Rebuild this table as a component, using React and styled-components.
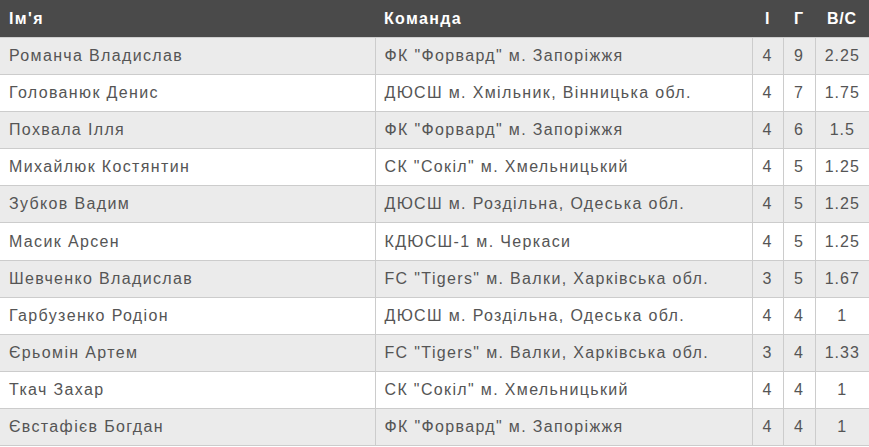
import React from "react";
import styled, { createGlobalStyle } from "styled-components";

const Global = createGlobalStyle`
  html, body { margin: 0; padding: 0; background: #fff; }
  body { font-family: "Liberation Sans", Arial, sans-serif; }
`;

const Table = styled.table`
  width: 869px;
  border-collapse: collapse;
  table-layout: fixed;
  font-family: "Liberation Sans", Arial, sans-serif;
  font-size: 16px;
  letter-spacing: 1.35px;
`;

const HeadRow = styled.tr`
  background: #4a4a4a;
`;

const Th = styled.th`
  color: #fff;
  font-weight: bold;
  text-align: ${(p) => (p.$center ? "center" : "left")};
  padding: 0 ${(p) => (p.$center ? "0" : "9px")};
  height: 37px;
  line-height: 18px;
  border-bottom: 1px solid #cfcfcf;
  letter-spacing: ${(p) => (p.$center ? "0.8px" : "1.35px")};
`;

const Row = styled.tr`
  background: ${(p) => (p.$odd ? "#ebebeb" : "#ffffff")};
`;

const Td = styled.td`
  color: #555;
  text-align: ${(p) => (p.$center ? "center" : "left")};
  padding: 0 ${(p) => (p.$center ? "0" : "9px")};
  height: 36.1px;
  line-height: 18px;
  border-bottom: 1px solid #cccccc;
  border-left: ${(p) => (p.$line ? "1px solid #cccccc" : "none")};
  white-space: nowrap;
  letter-spacing: ${(p) => (p.$center ? "1px" : "1.35px")};
`;

const rows = [
  ["Романча Владислав", 'ФК "Форвард" м. Запоріжжя', 4, 9, "2.25"],
  ["Голованюк Денис", "ДЮСШ м. Хмільник, Вінницька обл.", 4, 7, "1.75"],
  ["Похвала Ілля", 'ФК "Форвард" м. Запоріжжя', 4, 6, "1.5"],
  ["Михайлюк Костянтин", 'СК "Сокіл" м. Хмельницький', 4, 5, "1.25"],
  ["Зубков Вадим", "ДЮСШ м. Роздільна, Одеська обл.", 4, 5, "1.25"],
  ["Масик Арсен", "КДЮСШ-1 м. Черкаси", 4, 5, "1.25"],
  ["Шевченко Владислав", 'FC "Tigers" м. Валки, Харківська обл.', 3, 5, "1.67"],
  ["Гарбузенко Родіон", "ДЮСШ м. Роздільна, Одеська обл.", 4, 4, "1"],
  ["Єрьомін Артем", 'FC "Tigers" м. Валки, Харківська обл.', 3, 4, "1.33"],
  ["Ткач Захар", 'СК "Сокіл" м. Хмельницький', 4, 4, "1"],
  ["Євстафієв Богдан", 'ФК "Форвард" м. Запоріжжя', 4, 4, "1"],
];

export default function App() {
  return (
    <>
      <Global />
      <Table>
        <colgroup>
          <col style={{ width: 375 }} />
          <col style={{ width: 377 }} />
          <col style={{ width: 31 }} />
          <col style={{ width: 32 }} />
          <col style={{ width: 54 }} />
        </colgroup>
        <thead>
          <HeadRow>
            <Th>Ім'я</Th>
            <Th>Команда</Th>
            <Th $center>І</Th>
            <Th $center>Г</Th>
            <Th $center>В/С</Th>
          </HeadRow>
        </thead>
        <tbody>
          {rows.map((r, i) => (
            <Row key={i} $odd={i % 2 === 0}>
              <Td>{r[0]}</Td>
              <Td $line>{r[1]}</Td>
              <Td $line $center>{r[2]}</Td>
              <Td $line $center>{r[3]}</Td>
              <Td $line $center>{r[4]}</Td>
            </Row>
          ))}
        </tbody>
      </Table>
    </>
  );
}
